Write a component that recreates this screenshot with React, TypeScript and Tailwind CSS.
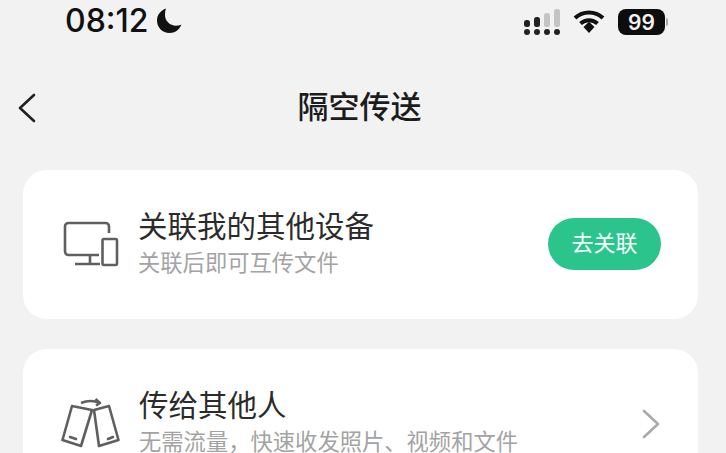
export default function App() {
  const cjk = "font-['Noto_Sans_CJK_SC','Noto_Sans',sans-serif]";

  return (
    <div className={`h-[453px] w-[726px] overflow-hidden bg-[#f2f2f2] ${cjk}`}>
      {/* Status bar */}
      <div className="flex h-[44px] items-center justify-between pl-[65px] pr-[58px]">
        <div className="mb-[2px] flex items-center gap-[6px]">
          <span className="font-['Inter',sans-serif] text-[32px] leading-none font-medium text-[#111]">08:12</span>
          <svg width="28" height="28" viewBox="0 0 28 28">
            <path d="M11 1.500C5.500 3.500 2 8 2 13.500C2 20.500 7.500 26 14.500 26C20 26 24.500 22.500 26.500 17.500C25 18.300 23 18.700 21 18.700C15 18.700 10 14 10 8C10 5.500 10.300 3.500 11 1.500Z" fill="#111" />
          </svg>
        </div>
        <div className="flex items-center">
          <svg width="38" height="26" viewBox="0 0 38 26">
            <rect x="1" y="11" width="6" height="7" rx="2.500" fill="#222" />
            <rect x="11" y="8" width="6" height="10" rx="2.500" fill="#222" />
            <rect x="21" y="4" width="6" height="14" rx="2.500" fill="#c4c4c4" />
            <rect x="31" y="0" width="6" height="18" rx="2.500" fill="#c4c4c4" />
            <circle cx="4" cy="23" r="3" fill="#222" />
            <circle cx="14" cy="23" r="3" fill="#222" />
            <circle cx="24" cy="23" r="3" fill="#222" />
            <circle cx="34" cy="23" r="3" fill="#222" />
          </svg>
          <svg className="ml-[12px]" width="32" height="26" viewBox="0 0 32 26" fill="none">
            <path d="M2 9C10 1.500 22 1.500 30 9" stroke="#111" strokeWidth="4" />
            <path d="M7.500 14.500C12.500 10 19.500 10 24.500 14.500" stroke="#111" strokeWidth="4" />
            <path d="M10.500 18L16 12.800L21.500 18L16 24Z" fill="#111" />
          </svg>
          <span className="ml-[13px] flex h-[26px] w-[47px] items-center justify-center rounded-[8px] bg-[#0d0d0d] font-['Inter',sans-serif] text-[21px] leading-none font-semibold text-[#f2f2f2]">
            99
          </span>
          <span className="ml-[1px] h-[8px] w-[2px] rounded-r-full bg-[#aaa]" />
        </div>
      </div>

      {/* Nav bar */}
      <div className="relative mt-[32px] flex h-[56px] items-center justify-center pr-[7px]">
        <svg className="absolute left-[17px] top-[17px]" width="20" height="30" viewBox="0 0 20 30" fill="none">
          <path d="M17 2L3 15L17 28" stroke="#222" strokeWidth="2.600" strokeLinecap="round" strokeLinejoin="round" />
        </svg>
        <h1 className="text-[31px] leading-none font-medium text-[#1c1c1c]">隔空传送</h1>
      </div>

      {/* Cards */}
      <div className="mt-[38px] flex flex-col gap-[30px] pl-[23px] pr-[28px]">
        <div className="flex h-[149px] items-center rounded-[24px] bg-white pl-[40px] pr-[37px]">
          <svg width="56" height="48" viewBox="0 0 56 48" fill="none" stroke="#5f5f5f" strokeWidth="2.600">
            <path d="M36 34H5.500C3.500 34 2 32.500 2 30.500V5.500C2 3.500 3.500 2 5.500 2H42.500C44.500 2 46 3.500 46 5.500V12" />
            <path d="M27 34V43M12 43H37" />
            <rect x="39.500" y="18" width="14.500" height="26" rx="1.500" />
          </svg>
          <div className="ml-[19px] flex-1 pb-[4px]">
            <div className="text-[29.500px] leading-[36px] text-[#2b2b2b]">关联我的其他设备</div>
            <div className="text-[22.300px] leading-[38px] text-[#a3a3a3]">关联后即可互传文件</div>
          </div>
          <button className="mb-[2px] h-[52px] w-[113px] rounded-full bg-[#2bc48d] pb-[6px] text-[22px] leading-none text-[#f4fffa]">去关联</button>
        </div>
        <div className="flex h-[149px] items-start rounded-[24px] bg-white pl-[38px] pr-[37px] pt-[36px]">
          <svg className="mt-[13px]" width="60" height="52" viewBox="0 0 60 52" fill="none" stroke="#5f5f5f" strokeWidth="2.600" strokeLinejoin="round">
            <path d="M11 8L31 12L20 48L1.500 42Z" />
            <path d="M33 12L48 8L57.500 42L38 48Z" />
            <path d="M9 39L15 41M47 41L52 39" strokeLinecap="round" />
            <path d="M20 5C26 2.500 33 2.500 39 5M34.500 1L39 5L35 7.500" />
          </svg>
          <div className="ml-[18px] flex-1">
            <div className="text-[29.500px] leading-[36px] text-[#2b2b2b]">传给其他人</div>
            <div className="text-[22.300px] leading-[38px] text-[#a3a3a3]">无需流量，快速收发照片、视频和文件</div>
          </div>
          <svg className="mt-[24px]" width="20" height="30" viewBox="0 0 20 30" fill="none">
            <path d="M3 2L17 15L3 28" stroke="#aaaaaa" strokeWidth="2.600" strokeLinecap="round" strokeLinejoin="round" />
          </svg>
        </div>
      </div>
    </div>
  );
}
